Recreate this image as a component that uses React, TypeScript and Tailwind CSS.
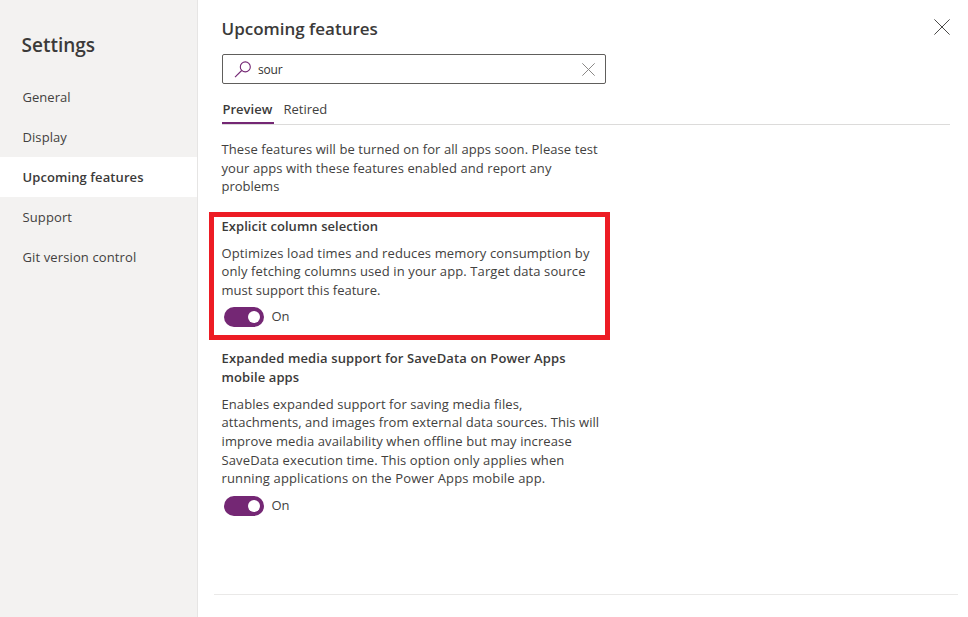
import React from "react";

type Line = { text: string; track?: string };

const navItems = [
  { label: "General", track: "tracking-[0.04px]" },
  { label: "Display", track: "tracking-[0.08px]" },
  { label: "Upcoming features", track: "tracking-[0.09px]", active: true },
  { label: "Support", track: "tracking-[0.12px]" },
  { label: "Git version control", track: "tracking-[0.12px]" },
];

function Lines({ lines, className = "" }: { lines: Line[]; className?: string }) {
  return (
    <div className={`whitespace-nowrap leading-[18.67px] ${className}`}>
      {lines.map((line) => (
        <div key={line.text} className={line.track ?? ""}>
          {line.text}
        </div>
      ))}
    </div>
  );
}

function Toggle() {
  return (
    <div className="flex h-5 items-start pl-0.5">
      <button
        type="button"
        role="switch"
        aria-checked="true"
        className="flex h-5 w-10 items-center justify-end rounded-full bg-[#742774] pr-1"
      >
        <span className="h-3 w-3 rounded-full bg-white" />
      </button>
      <span className="ml-[7.5px] leading-[18px]">On</span>
    </div>
  );
}

function Cross({ size, className }: { size: number; className: string }) {
  return (
    <svg width={size} height={size} viewBox="0 0 16 16" className={className} fill="none" stroke="currentColor">
      <path d="M0.4 0.4L15.6 15.6M15.6 0.4L0.4 15.6" strokeWidth={16 / size} />
    </svg>
  );
}

export default function App() {
  return (
    <div className="flex h-[617px] w-[968px] overflow-hidden bg-white font-['Open_Sans','Noto_Sans',sans-serif] text-[13px] text-[#424140]">
      <aside className="w-[198px] shrink-0 border-r border-[#e6e5e4] bg-[#f3f2f1]">
        <h1 className="h-[77px] pt-[31px] pl-[21.5px] text-[19px] leading-7 font-semibold text-[#3b3a39]">
          Settings
        </h1>
        <nav>
          {navItems.map((item) => (
            <div
              key={item.label}
              className={`flex h-10 items-center pt-0.5 pl-[22.5px] ${item.active ? "bg-white font-semibold text-[#3b3a39]" : ""}`}
            >
              <span className={item.track}>{item.label}</span>
            </div>
          ))}
        </nav>
      </aside>

      <main className="flex min-w-0 flex-1 flex-col">
        <header className="flex h-[54px] shrink-0 justify-between pr-[18px] pl-[23.5px]">
          <h2 className="pt-[15px] text-[17px] leading-7 font-semibold text-[#3b3a39]">Upcoming features</h2>
          <Cross size={16} className="mt-[19px] text-[#4a4948]" />
        </header>

        <div className="ml-6 flex h-[30px] w-[384px] shrink-0 items-center rounded-[2px] border border-[#605e5c] pr-[10px] pl-[11px]">
          <svg width="18" height="17" viewBox="0 0 18 17" fill="none" stroke="#742774" strokeWidth="1.1">
            <circle cx="11.3" cy="5.9" r="5" />
            <path d="M7.7 9.5L1 16.2" />
          </svg>
          <span className="ml-1.5 flex-1 pt-0.5 text-[12px] tracking-[-0.2px] text-[#323130]">sour</span>
          <Cross size={13} className="text-[#8a8886]" />
        </div>

        <div className="mt-[10px] mr-[18px] ml-6 flex h-[31px] shrink-0 border-b border-[#dcdbda]">
          <div className="h-[30px] w-[52px] border-b-2 border-[#742774] pl-[0.5px] leading-[30px] font-semibold text-[#3b3a39]">
            Preview
          </div>
          <div className="ml-[9.5px] leading-[30px]">Retired</div>
        </div>

        <Lines
          className="mt-[15px] ml-[23.5px]"
          lines={[
            { text: "These features will be turned on for all apps soon. Please test", track: "tracking-[0.08px]" },
            { text: "your apps with these features enabled and report any", track: "tracking-[0.08px]" },
            { text: "problems" },
          ]}
        />

        <section className="mt-4 ml-[11px] h-[128px] w-[401px] shrink-0 border-5 border-[#ed1c24] pl-[7.5px]">
          <Lines
            className="font-semibold text-[#3b3a39]"
            lines={[{ text: "Explicit column selection", track: "tracking-[0.06px]" }]}
          />
          <Lines
            className="mt-2"
            lines={[
              { text: "Optimizes load times and reduces memory consumption by", track: "tracking-[0.13px]" },
              { text: "only fetching columns used in your app. Target data source", track: "tracking-[0.11px]" },
              { text: "must support this feature.", track: "tracking-[0.02px]" },
            ]}
          />
          <div className="mt-[7px] ml-[0.5px]">
            <Toggle />
          </div>
        </section>

        <section className="mt-[9px] ml-[23.5px] w-[384px]">
          <Lines
            className="font-semibold text-[#3b3a39]"
            lines={[
              { text: "Expanded media support for SaveData on Power Apps", track: "tracking-[0.12px]" },
              { text: "mobile apps", track: "tracking-[0.1px]" },
            ]}
          />
          <Lines
            className="mt-[8.2px]"
            lines={[
              { text: "Enables expanded support for saving media files,", track: "tracking-[0.08px]" },
              { text: "attachments, and images from external data sources. This will", track: "tracking-[0.06px]" },
              { text: "improve media availability when offline but may increase", track: "tracking-[0.11px]" },
              { text: "SaveData execution time. This option only applies when", track: "tracking-[0.12px]" },
              { text: "running applications on the Power Apps mobile app.", track: "tracking-[0.14px]" },
            ]}
          />
          <div className="mt-[8.3px] ml-[0.5px]">
            <Toggle />
          </div>
        </section>

        <footer className="mt-auto mr-[10px] ml-4 h-[23px] shrink-0 border-t border-[#eae9e8]" />
      </main>
    </div>
  );
}
